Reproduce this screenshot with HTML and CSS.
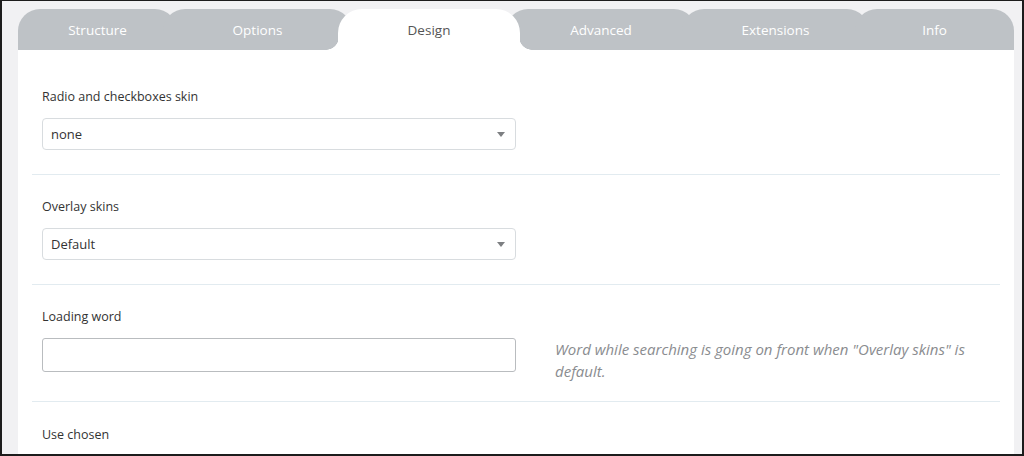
FILE: index.html
```html
<!DOCTYPE html>
<html>
<head>
<meta charset="utf-8">
<link rel="stylesheet" href="styles.css">
</head>
<body>
<div class="frame">
  <div class="tabs">
    <div class="tab t1">Structure</div>
    <div class="tab t2">Options</div>
    <div class="tab t3 active">Design</div>
    <div class="tab t4">Advanced</div>
    <div class="tab t5">Extensions</div>
    <div class="tab t6">Info</div>
  </div>
  <div class="panel">
    <div class="section">
      <div class="label">Radio and checkboxes skin</div>
      <div class="select"><span>none</span><span class="arrow"></span></div>
    </div>
    <div class="section">
      <div class="label">Overlay skins</div>
      <div class="select"><span>Default</span><span class="arrow"></span></div>
    </div>
    <div class="section s3">
      <div class="label">Loading word</div>
      <div class="row">
        <div class="input"></div>
        <div class="help">Word while searching is going on front when "Overlay skins" is default.</div>
      </div>
    </div>
    <div class="section last">
      <div class="label">Use chosen</div>
    </div>
  </div>
</div>
</body>
</html>
```

FILE: styles.css
```css
html, body {
  margin: 0;
  padding: 0;
}
body {
  width: 1024px;
  height: 456px;
  overflow: hidden;
  font-family: "Open Sans", "Liberation Sans", sans-serif;
}
.frame {
  box-sizing: border-box;
  width: 1024px;
  height: 456px;
  border: 2px solid #1c1c1c;
  border-top-width: 1px;
  background: #f1f1f3;
  padding: 8px 8px 0 16px;
  overflow: hidden;
}
.tabs {
  display: flex;
  height: 41px;
}
.tab {
  position: relative;
  height: 41px;
  background: #bec2c6;
  border-radius: 22px 22px 0 0;
  color: #fff;
  font-size: 13.5px;
  line-height: 42px;
  text-align: center;
  margin-left: -14px;
}
.t1 { margin-left: 0; width: 159px; }
.t2 { width: 189px; }
.t3 { width: 182px; }
.t4 { width: 190px; }
.t5 { width: 187px; }
.t6 { width: 159px; }
.tab.active {
  background: #fff;
  color: #555;
  z-index: 2;
  border-radius: 24px 24px 0 0;
}
.tab.active::before,
.tab.active::after {
  content: "";
  position: absolute;
  bottom: 0;
  width: 13px;
  height: 13px;
}
.tab.active::before {
  left: -12px;
  background: radial-gradient(circle at 0 0, transparent 12.5px, #fff 13px);
}
.tab.active::after {
  right: -12px;
  background: radial-gradient(circle at 100% 0, transparent 12.5px, #fff 13px);
}
.panel {
  background: #fff;
  height: 420px;
  padding: 15px 14px 0;
}
.section {
  padding: 22px 10px 24px;
  border-bottom: 1px solid #e2ebf0;
}
.section.s3 {
  padding-bottom: 19px;
}
.section.last {
  border-bottom: none;
  padding-top: 23px;
}
.label {
  font-size: 12.5px;
  color: #333;
  line-height: 19px;
  margin-bottom: 12px;
}
.select {
  box-sizing: border-box;
  width: 474px;
  height: 32px;
  border: 1px solid #d8dcdf;
  border-radius: 4px;
  display: flex;
  align-items: center;
  justify-content: space-between;
  padding: 0 10px 0 8px;
  font-size: 13px;
  color: #333;
}
.arrow {
  width: 0;
  height: 0;
  border-left: 4px solid transparent;
  border-right: 4px solid transparent;
  border-top: 5px solid #7d7f82;
  margin-top: 1px;
}
.row {
  display: flex;
  align-items: flex-start;
}
.input {
  box-sizing: border-box;
  flex: none;
  width: 474px;
  height: 34px;
  border: 1px solid #b9bcbf;
  border-radius: 3px;
}
.help {
  margin-left: 39px;
  flex: 1;
  font-size: 15px;
  font-style: italic;
  color: #8a8c8f;
  line-height: 22px;
}
```
